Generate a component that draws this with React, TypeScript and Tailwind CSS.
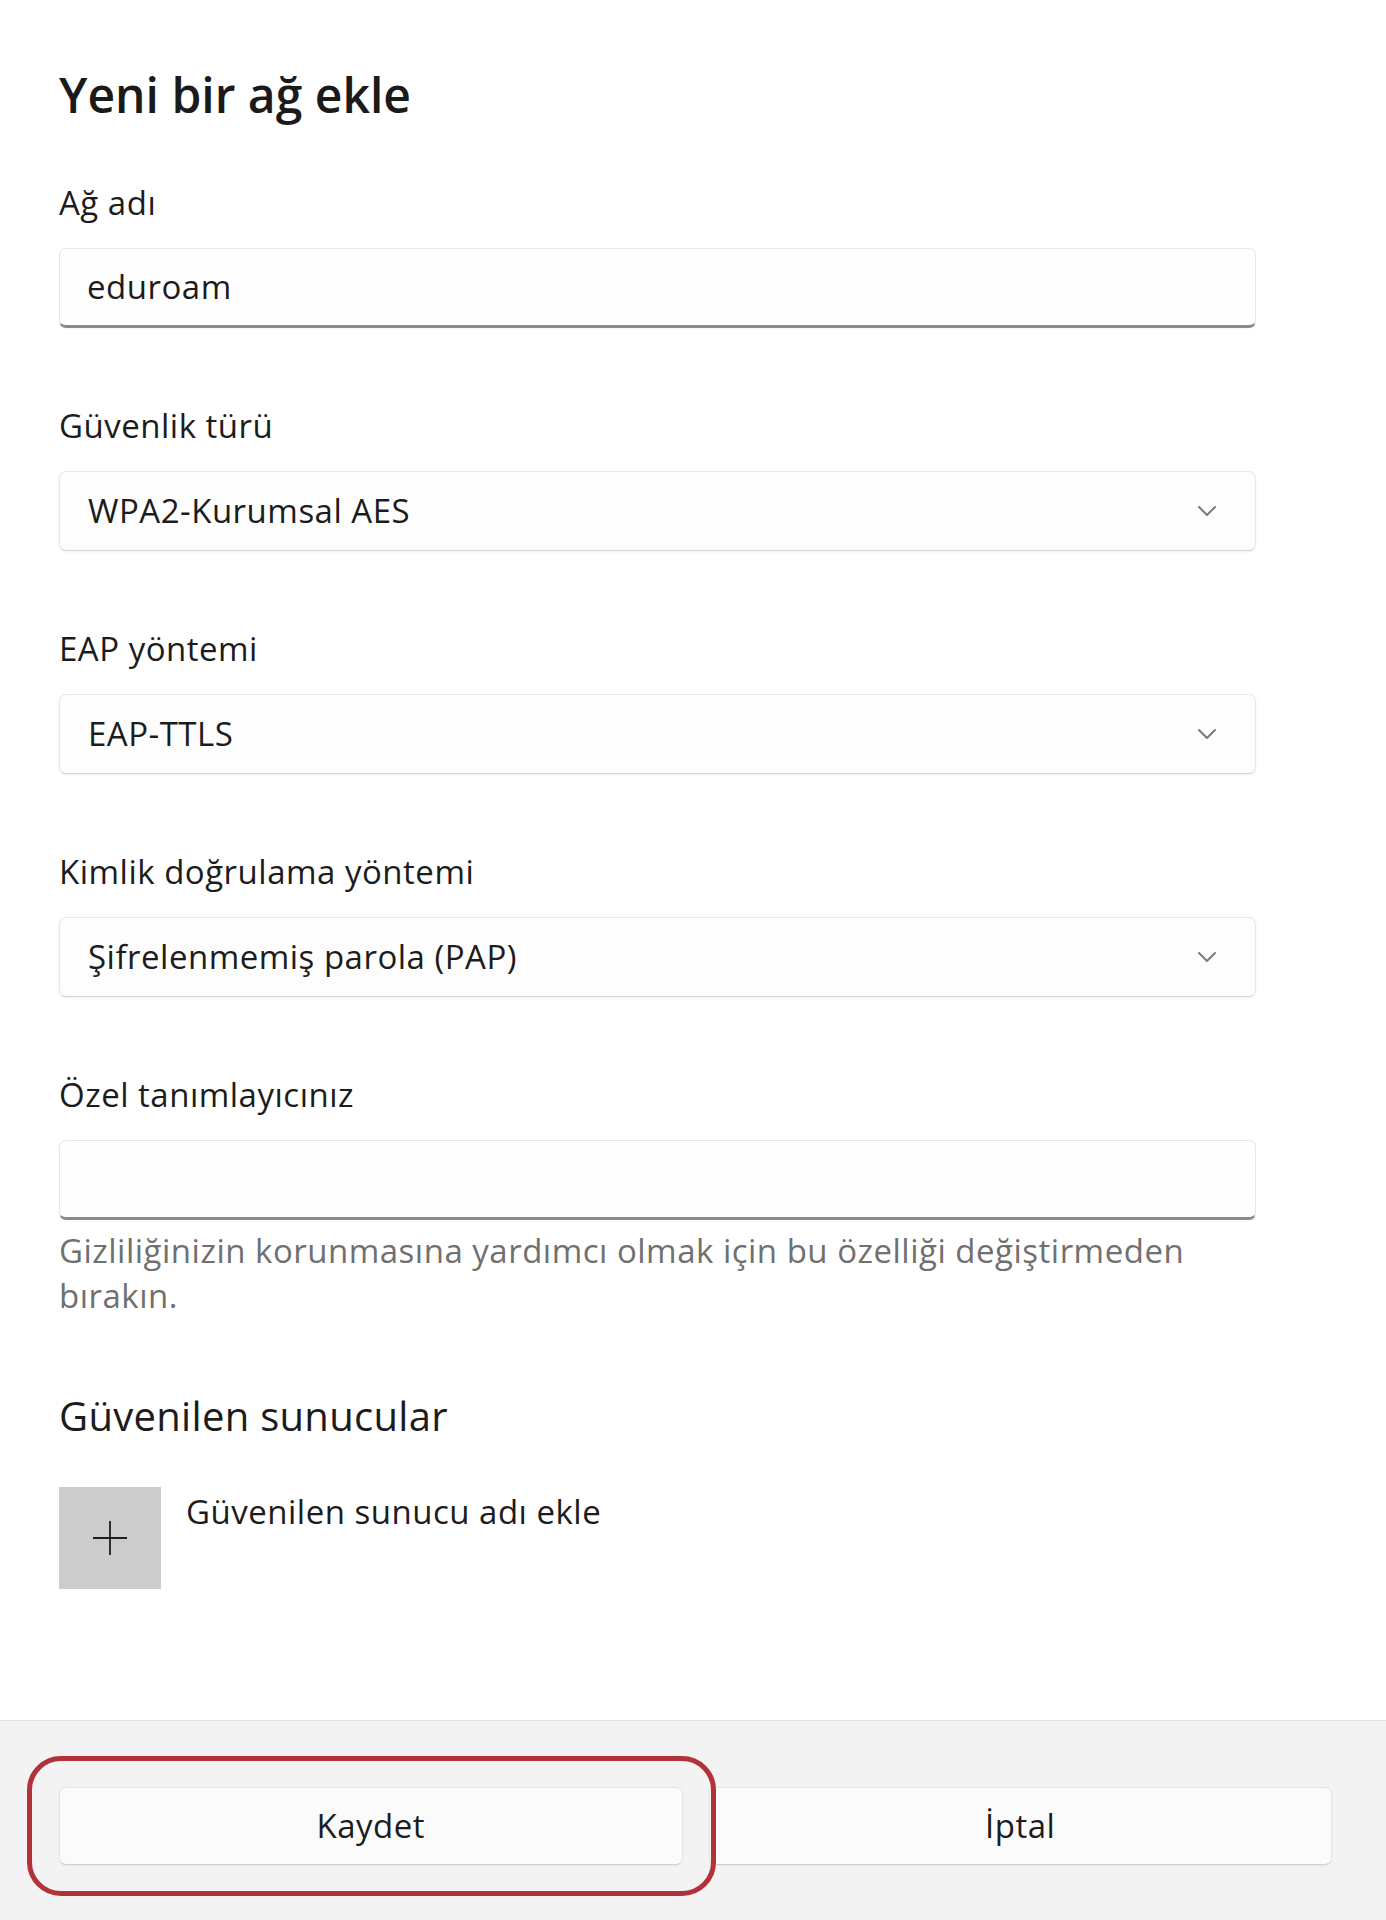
import React from "react";

const font = { fontFamily: '"Open Sans", "Noto Sans", Arial, sans-serif' };

function Chevron() {
  return (
    <svg width="20" height="12" viewBox="0 0 20 12" className="mr-[38px] shrink-0">
      <path d="M2 2 L10 10 L18 2" fill="none" stroke="#7a7a7a" strokeWidth="2" strokeLinecap="round" strokeLinejoin="round" />
    </svg>
  );
}

function TextBox({ value }: { value?: string }) {
  return (
    <div className="mt-[23px] h-[80px] w-[1197px] rounded-[7px] border border-[#e6e6e6] border-b-[3px] border-b-[#8a8a8a] bg-[#fefefe] flex items-center pl-[27px] shadow-[0_1px_2px_rgba(0,0,0,0.04)]">
      <span className="text-[33px] leading-[44px] tracking-[0.5px] text-[#1c1c1c]">{value}</span>
    </div>
  );
}

function Select({ value }: { value: string }) {
  return (
    <div className="mt-[23px] h-[80px] w-[1197px] rounded-[7px] border border-[#e8e8e8] border-b-[#d2d2d2] bg-[#fdfdfd] flex items-center justify-between pl-[28px] shadow-[0_1px_3px_rgba(0,0,0,0.06)]">
      <span className="text-[33px] leading-[44px] tracking-[0.5px] text-[#1c1c1c]">{value}</span>
      <Chevron />
    </div>
  );
}

function Label({ children }: { children: React.ReactNode }) {
  return <div className="text-[33px] leading-[44px] tracking-[0.5px] text-[#1c1c1c]">{children}</div>;
}

export default function App() {
  return (
    <div style={font} className="relative w-[1386px] h-[1920px] bg-white flex flex-col overflow-hidden">
      <main className="flex-1 pl-[59px] pt-[63px]">
        <h1 className="text-[48px] leading-[64px] font-semibold text-[#1a1a1a]">Yeni bir ağ ekle</h1>

        <div className="mt-[54px]">
          <Label>Ağ adı</Label>
          <TextBox value="eduroam" />
        </div>

        <div className="mt-[76px]">
          <Label>Güvenlik türü</Label>
          <Select value="WPA2-Kurumsal AES" />
        </div>

        <div className="mt-[76px]">
          <Label>EAP yöntemi</Label>
          <Select value="EAP-TTLS" />
        </div>

        <div className="mt-[76px]">
          <Label>Kimlik doğrulama yöntemi</Label>
          <Select value="Şifrelenmemiş parola (PAP)" />
        </div>

        <div className="mt-[76px]">
          <Label>Özel tanımlayıcınız</Label>
          <TextBox />
          <p className="mt-[8px] text-[33px] leading-[45px] tracking-[0.5px] text-[#707070]">
            Gizliliğinizin korunmasına yardımcı olmak için bu özelliği değiştirmeden
            <br />
            bırakın.
          </p>
        </div>

        <h2 className="mt-[72px] text-[40px] leading-[52px] tracking-[0.3px] text-[#1c1c1c]">Güvenilen sunucular</h2>

        <div className="mt-[45px] flex items-start">
          <div className="w-[102px] h-[102px] bg-[#cccccc] flex items-center justify-center">
            <svg width="38" height="38" viewBox="0 0 38 38">
              <path d="M19 2 V36 M2 19 H36" stroke="#1e1e1e" strokeWidth="1.8" fill="none" />
            </svg>
          </div>
          <span className="ml-[25px] mt-[3px] text-[33px] leading-[44px] tracking-[0.5px] text-[#1c1c1c]">Güvenilen sunucu adı ekle</span>
        </div>
      </main>

      <footer className="relative h-[200px] bg-[#f3f3f3] border-t border-[#e4e4e4] pt-[66px] pl-[59px] pr-[54px]">
        <div className="grid grid-cols-2 gap-[26px]">
          <button className="h-[78px] rounded-[7px] border border-[#e5e5e5] border-b-[#d0d0d0] bg-[#fbfbfb] text-[33px] tracking-[0.5px] text-[#1c1c1c] shadow-[0_1px_2px_rgba(0,0,0,0.05)]">
            Kaydet
          </button>
          <button className="h-[78px] rounded-[7px] border border-[#e5e5e5] border-b-[#d0d0d0] bg-[#fbfbfb] text-[33px] tracking-[0.5px] text-[#1c1c1c] shadow-[0_1px_2px_rgba(0,0,0,0.05)]">
            İptal
          </button>
        </div>
        <div className="absolute left-[27px] top-[35px] w-[689px] h-[140px] rounded-[34px] border-[5px] border-[#b3323a] pointer-events-none" />
      </footer>
    </div>
  );
}
